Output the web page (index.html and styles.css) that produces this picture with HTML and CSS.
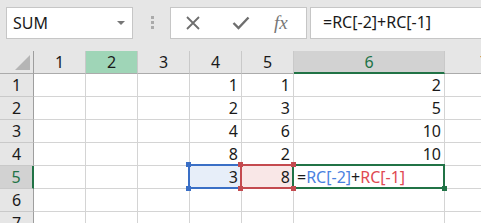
FILE: index.html
```html
<!DOCTYPE html>
<html lang="en">
<head>
  <meta charset="UTF-8">
  <title>Sheet</title>
  <link rel="stylesheet" href="styles.css">
</head>
<body>

  <!-- formula bar -->
  <div class="toolbar">
    <div class="name-box">
      <span>SUM</span>
      <span class="drop"></span>
    </div>
    <div class="grip"><i></i><i></i><i></i></div>
    <div class="fx-buttons">
      <svg class="icon" width="16" height="16" viewBox="0 0 16 16">
        <path d="M2 2 L14 14 M14 2 L2 14" stroke="#6e6e6e" stroke-width="1.8" fill="none"/>
      </svg>
      <svg class="icon" width="18" height="14" viewBox="0 0 18 14">
        <path d="M1.5 7 L6.5 12 L16.5 1.5" stroke="#6e6e6e" stroke-width="2.4" fill="none"/>
      </svg>
      <span class="fx">fx</span>
    </div>
    <div class="formula">=RC[-2]+RC[-1]</div>
  </div>

  <!-- sheet -->
  <div class="sheet">
    <div class="corner"><span class="tri"></span></div>
    <div class="col-head">1</div>
    <div class="col-head green">2</div>
    <div class="col-head">3</div>
    <div class="col-head">4</div>
    <div class="col-head">5</div>
    <div class="col-head active">6</div>
    <div class="col-head">7</div>

    <div class="row-head">1</div>
    <div class="cell"></div><div class="cell"></div><div class="cell"></div>
    <div class="cell">1</div><div class="cell">1</div><div class="cell">2</div><div class="cell"></div>

    <div class="row-head">2</div>
    <div class="cell"></div><div class="cell"></div><div class="cell"></div>
    <div class="cell">2</div><div class="cell">3</div><div class="cell">5</div><div class="cell"></div>

    <div class="row-head">3</div>
    <div class="cell"></div><div class="cell"></div><div class="cell"></div>
    <div class="cell">4</div><div class="cell">6</div><div class="cell">10</div><div class="cell"></div>

    <div class="row-head">4</div>
    <div class="cell"></div><div class="cell"></div><div class="cell"></div>
    <div class="cell">8</div><div class="cell">2</div><div class="cell">10</div><div class="cell"></div>

    <div class="row-head active">5</div>
    <div class="cell"></div><div class="cell"></div><div class="cell"></div>
    <div class="cell ref-blue">3
      <span class="handle tl"></span><span class="handle bl"></span>
    </div>
    <div class="cell ref-red">8
      <span class="handle tl"></span><span class="handle bl"></span>
      <span class="handle tr"></span><span class="handle br"></span>
    </div>
    <div class="cell editing"><span>=</span><span class="c-blue">RC[-2]</span><span>+</span><span class="c-red">RC[-1]</span>
      <span class="handle br"></span>
    </div>
    <div class="cell"></div>

    <div class="row-head">6</div>
    <div class="cell"></div><div class="cell"></div><div class="cell"></div>
    <div class="cell"></div><div class="cell"></div><div class="cell"></div><div class="cell"></div>

    <div class="row-head">7</div>
    <div class="cell"></div><div class="cell"></div><div class="cell"></div>
    <div class="cell"></div><div class="cell"></div><div class="cell"></div><div class="cell"></div>
  </div>

</body>
</html>
```

FILE: styles.css
```css
body {
  margin: 0;
  padding: 0;
  width: 481px;
  height: 223px;
  overflow: hidden;
  background-color: #e6e6e6;
  font-family: "Noto Sans", "Open Sans", sans-serif;
  color: #1a1a1a;
}

.toolbar {
  display: flex;
  align-items: flex-start;
  height: 51px;
  padding-top: 7px;
  box-sizing: border-box;
  padding-left: 6px;
}

.name-box {
  display: flex;
  align-items: center;
  justify-content: space-between;
  width: 127px;
  height: 32px;
  box-sizing: border-box;
  background-color: #fff;
  border: 1px solid #c6c6c6;
  padding: 0 7px 0 6px;
  font-size: 16px;
}

.drop {
  width: 0;
  height: 0;
  border-left: 4px solid transparent;
  border-right: 4px solid transparent;
  border-top: 4px solid #777;
}

.grip {
  display: flex;
  flex-direction: column;
  gap: 2px;
  margin: 9px 16px 0 18px;
}

.grip i {
  display: block;
  width: 3px;
  height: 3px;
  background-color: #aaa;
}

.fx-buttons {
  display: flex;
  align-items: center;
  width: 137px;
  height: 32px;
  box-sizing: border-box;
  background-color: #fff;
  border: 1px solid #c6c6c6;
  padding-left: 14px;
}

.fx-buttons .icon:nth-child(2) {
  margin-left: 31px;
}

.fx {
  margin-left: 24px;
  font-family: "Liberation Serif", serif;
  font-style: italic;
  font-size: 19px;
  color: #777;
}

.formula {
  flex: 1;
  height: 32px;
  box-sizing: border-box;
  margin-left: 3px;
  background-color: #fff;
  border: 1px solid #c6c6c6;
  border-right: none;
  padding-left: 12px;
  line-height: 29px;
  font-size: 16px;
}

.sheet {
  display: grid;
  grid-template-columns: 34px 52px 52px 52px 52px 52px 151px 80px;
  grid-template-rows: 23px;
  grid-auto-rows: 23px;
  background-color: #fff;
  font-size: 16px;
}

.corner,
.col-head,
.row-head,
.cell {
  box-sizing: border-box;
  border-right: 1px solid #d4d4d4;
  border-bottom: 1px solid #d4d4d4;
}

.corner {
  position: relative;
  background-color: #e6e6e6;
  border-right: 1px solid #9e9e9e;
  border-bottom: 1px solid #ababab;
}

.tri {
  position: absolute;
  right: 3px;
  bottom: 3px;
  width: 0;
  height: 0;
  border-left: 15px solid transparent;
  border-bottom: 15px solid #b5b5b5;
}

.col-head {
  background-color: #e6e6e6;
  border-right: 1px solid #c9c9c9;
  border-bottom: 1px solid #ababab;
  text-align: center;
  line-height: 22px;
}

.col-head.green {
  background-color: #9fd5b7;
}

.col-head.active {
  background-color: #d2d2d2;
  border-bottom: 2px solid #217346;
  color: #217346;
}

.row-head {
  background-color: #e6e6e6;
  border-right: 1px solid #9e9e9e;
  border-bottom: 1px solid #c9c9c9;
  text-align: center;
  line-height: 22px;
}

.row-head.active {
  background-color: #d2d2d2;
  border-right: 2px solid #217346;
  color: #217346;
}

.cell {
  position: relative;
  text-align: right;
  padding-right: 3px;
  line-height: 22px;
  white-space: nowrap;
}

.cell::before {
  content: "";
  position: absolute;
  left: -2px;
  top: -2px;
  right: -1px;
  bottom: -1px;
  border: 2px solid transparent;
  pointer-events: none;
}

.ref-blue {
  background-color: #e7eef9;
}

.ref-blue::before {
  border-color: #3a6fc6;
}

.ref-red {
  background-color: #f9e7e7;
}

.ref-red::before {
  border-color: #c44a4f;
}

.editing {
  text-align: left;
  padding-left: 3px;
  z-index: 2;
}

.editing::before {
  border-color: #217346;
}

.c-blue {
  color: #4a82e0;
}

.c-red {
  color: #df4a52;
}

.handle {
  position: absolute;
  width: 5px;
  height: 5px;
  z-index: 3;
}

.ref-blue .handle {
  background-color: #3a6fc6;
}

.ref-red .handle {
  background-color: #c44a4f;
}

.editing .handle {
  background-color: #217346;
}

.handle.tl { left: -4px; top: -4px; }
.handle.bl { left: -4px; bottom: -3px; }
.handle.tr { right: -3px; top: -4px; }
.handle.br { right: -3px; bottom: -3px; }
```
